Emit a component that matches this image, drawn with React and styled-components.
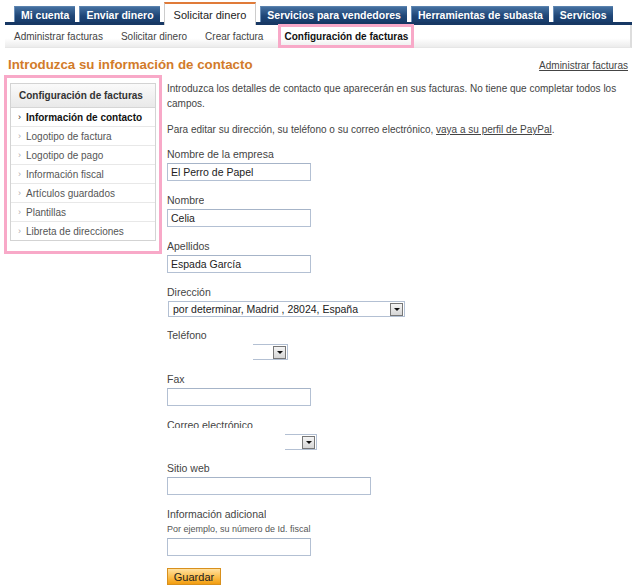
import styled, { createGlobalStyle } from "styled-components";

const Global = createGlobalStyle`
  body {
    margin: 0;
    background: #fff;
    font-family: "Liberation Sans", Arial, sans-serif;
    font-size: 10px;
    color: #333;
  }
`;

const Page = styled.div`
  width: 640px;
  height: 585px;
  overflow: hidden;
`;

const TabBar = styled.div`
  display: flex;
  align-items: flex-end;
  gap: 4px;
  height: 22px;
  margin: 0 8px 0 5px;
  padding-left: 9px;
  border-bottom: 3px solid #173864;
`;

const Tab = styled.div`
  display: flex;
  align-items: center;
  height: ${(p) => (p.$active ? "21px" : "15px")};
  padding: 0 ${(p) => (p.$active ? "9px" : "6px")};
  margin-bottom: ${(p) => (p.$active ? "-3px" : "0")};
  background: ${(p) =>
    p.$active ? "#fff" : "linear-gradient(#4470a0, #1f4677 60%, #183c6a)"};
  border-top: ${(p) => (p.$active ? "2px solid #e07b39" : "1px solid #5a82ae")};
  border-left: ${(p) => (p.$active ? "1px solid #ccc" : "1px solid #6b8fb8")};
  border-right: ${(p) => (p.$active ? "1px solid #ccc" : "0")};
  color: ${(p) => (p.$active ? "#222" : "#fff")};
  font-weight: ${(p) => (p.$active ? "normal" : "bold")};
  font-size: ${(p) => (p.$active ? "11px" : "10.5px")};
  white-space: nowrap;
`;

const SubNav = styled.div`
  display: flex;
  align-items: center;
  height: 22px;
  margin: 0 8px 0 5px;
  background: linear-gradient(#fff, #fff 60%, #ececec);
  border-right: 2px solid #ddd;
  border-bottom: 1px solid #e6e6e6;
`;

const SubItem = styled.div`
  padding: 0 ${(p) => (p.$active ? "3px" : "9px")};
  margin-left: ${(p) => (p.$active ? "6px" : "0")};
  height: ${(p) => (p.$active ? "18px" : "auto")};
  display: flex;
  align-items: center;
  font-size: 10px;
  color: ${(p) => (p.$active ? "#111" : "#444")};
  font-weight: ${(p) => (p.$active ? "bold" : "normal")};
  border: ${(p) => (p.$active ? "3px solid #f8a9c8" : "0")};
  white-space: nowrap;
`;

const HeadRow = styled.div`
  display: flex;
  justify-content: space-between;
  align-items: baseline;
  padding: 9px 12px 0 8px;
`;

const Title = styled.h1`
  margin: 0;
  font-size: 13.3px;
  font-weight: bold;
  color: #d27b2a;
`;

const TopLink = styled.a`
  color: #444;
  font-size: 10px;
  text-decoration: underline;
`;

const Body = styled.div`
  display: flex;
  align-items: flex-start;
  gap: 5px;
  padding: 3px 0 0 4px;
`;

const SideFrame = styled.div`
  width: 146px;
  padding: 5px 3px 10px 3px;
  border: 3px solid #f8a9c8;
`;

const SidePanel = styled.div`
  border: 1px solid #d3d3d3;
  background: #fff;
`;

const SideHead = styled.div`
  height: 23px;
  display: flex;
  align-items: center;
  padding-left: 8px;
  font-weight: bold;
  font-size: 10px;
  color: #333;
  background: linear-gradient(#fafafa, #e9e9e9);
  border-bottom: 1px solid #d6d6d6;
`;

const SideItem = styled.div`
  height: 18px;
  display: flex;
  align-items: center;
  gap: 5px;
  padding-left: 7px;
  border-top: ${(p) => (p.$first ? "0" : "1px solid #e8e8e8")};
  color: ${(p) => (p.$active ? "#111" : "#555")};
  font-weight: ${(p) => (p.$active ? "bold" : "normal")};
`;

const Chevron = styled.span`
  font-size: 9px;
  color: ${(p) => (p.$active ? "#222" : "#aaa")};
  font-weight: normal;
`;

const Main = styled.div`
  width: 462px;
  padding-top: 6px;
`;

const Para = styled.p`
  margin: 0 0 ${(p) => p.$mb || 11}px;
  line-height: 15px;
  color: #444;
`;

const ParaLink = styled.a`
  color: #444;
  text-decoration: underline;
`;

const Field = styled.div`
  display: flex;
  flex-direction: column;
  align-items: flex-start;
  margin-bottom: ${(p) => p.$mb || 12}px;
`;

const Label = styled.div`
  font-size: 10.5px;
  color: #444;
  line-height: 14px;
  margin-bottom: 2px;
  height: ${(p) => (p.$clipped ? "10px" : "auto")};
  overflow: hidden;
`;

const Hint = styled.div`
  font-size: 9px;
  color: #555;
  line-height: 12px;
  margin-bottom: 3px;
`;

const Input = styled.div`
  box-sizing: border-box;
  width: ${(p) => p.$w}px;
  height: 18px;
  border: 1px solid #b3c0d3;
  border-top-color: #a6b4c8;
  padding: 0 3px;
  display: flex;
  align-items: center;
  font-size: 10.5px;
  color: #222;
`;

const Select = styled.div`
  box-sizing: border-box;
  width: ${(p) => p.$w}px;
  height: 16px;
  margin-left: ${(p) => p.$ml || 0}px;
  margin-top: ${(p) => p.$mt || 0}px;
  border: 1px solid #b3c0d3;
  border-left: ${(p) => (p.$open ? "0" : "1px solid #b3c0d3")};
  display: flex;
  align-items: center;
  padding-left: 4px;
  font-size: 10.5px;
  color: #222;
`;

const Arrow = styled.span`
  box-sizing: border-box;
  width: 13px;
  height: 13px;
  margin: 0 1px 0 auto;
  border: 1px solid #777;
  background: linear-gradient(#f4f4f4, #d6d6d6);
  display: flex;
  align-items: center;
  justify-content: center;
  &::after {
    content: "";
    border-left: 3px solid transparent;
    border-right: 3px solid transparent;
    border-top: 3px solid #111;
  }
`;

const SaveButton = styled.button`
  width: 54px;
  height: 17px;
  padding: 0;
  border: 1px solid #d8901d;
  background: linear-gradient(#ffe1a0, #fbbd4a 55%, #f29d0f);
  font-family: "Liberation Sans", Arial, sans-serif;
  font-size: 11px;
  color: #222;
`;

const tabs = [
  "Mi cuenta",
  "Enviar dinero",
  "Solicitar dinero",
  "Servicios para vendedores",
  "Herramientas de subasta",
  "Servicios",
];

const sideItems = [
  "Información de contacto",
  "Logotipo de factura",
  "Logotipo de pago",
  "Información fiscal",
  "Artículos guardados",
  "Plantillas",
  "Libreta de direcciones",
];

export default function App() {
  return (
    <Page>
      <Global />
      <TabBar>
        {tabs.map((t) => (
          <Tab key={t} $active={t === "Solicitar dinero"}>
            {t}
          </Tab>
        ))}
      </TabBar>
      <SubNav>
        <SubItem>Administrar facturas</SubItem>
        <SubItem>Solicitar dinero</SubItem>
        <SubItem>Crear factura</SubItem>
        <SubItem $active>Configuración de facturas</SubItem>
      </SubNav>

      <HeadRow>
        <Title>Introduzca su información de contacto</Title>
        <TopLink>Administrar facturas</TopLink>
      </HeadRow>

      <Body>
        <SideFrame>
          <SidePanel>
            <SideHead>Configuración de facturas</SideHead>
            {sideItems.map((s, i) => (
              <SideItem key={s} $first={i === 0} $active={i === 0}>
                <Chevron $active={i === 0}>›</Chevron>
                {s}
              </SideItem>
            ))}
          </SidePanel>
        </SideFrame>

        <Main>
          <Para>
            Introduzca los detalles de contacto que aparecerán en sus facturas.
            No tiene que completar todos los campos.
          </Para>
          <Para $mb={10}>
            Para editar su dirección, su teléfono o su correo electrónico,{" "}
            <ParaLink>vaya a su perfil de PayPal</ParaLink>.
          </Para>

          <Field>
            <Label>Nombre de la empresa</Label>
            <Input $w={144}>El Perro de Papel</Input>
          </Field>
          <Field>
            <Label>Nombre</Label>
            <Input $w={144}>Celia</Input>
          </Field>
          <Field>
            <Label>Apellidos</Label>
            <Input $w={144}>Espada García</Input>
          </Field>
          <Field $mb={11}>
            <Label>Dirección</Label>
            <Select $w={237} $ml={1}>
              por determinar, Madrid , 28024, España
              <Arrow />
            </Select>
          </Field>
          <Field>
            <Label>Teléfono</Label>
            <Select $w={35} $ml={86} $open>
              <Arrow />
            </Select>
          </Field>
          <Field>
            <Label>Fax</Label>
            <Input $w={144} />
          </Field>
          <Field $mb={11}>
            <Label $clipped>Correo electrónico</Label>
            <Select $w={32} $ml={118} $mt={4} $open>
              <Arrow />
            </Select>
          </Field>
          <Field>
            <Label>Sitio web</Label>
            <Input $w={204} />
          </Field>
          <Field>
            <Label>Información adicional</Label>
            <Hint>Por ejemplo, su número de Id. fiscal</Hint>
            <Input $w={144} />
          </Field>
          <SaveButton>Guardar</SaveButton>
        </Main>
      </Body>
    </Page>
  );
}
